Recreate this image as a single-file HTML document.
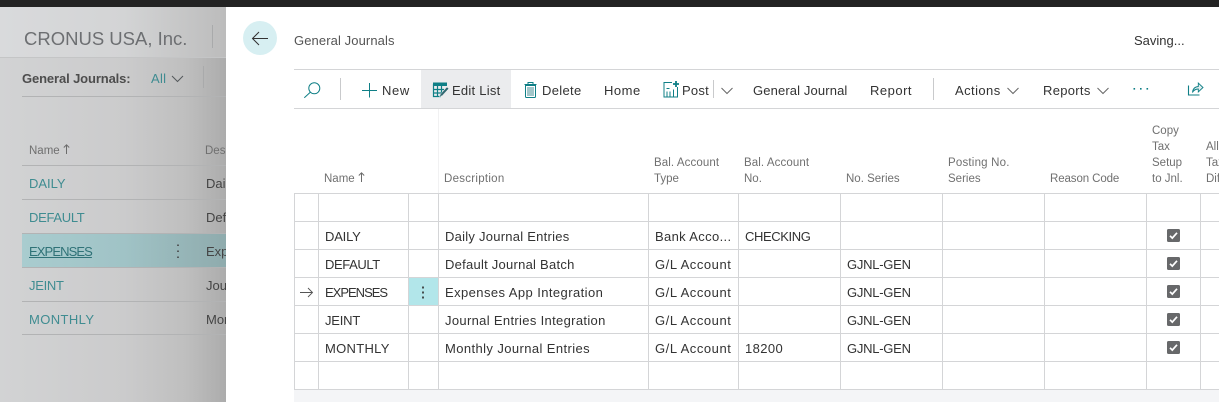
<!DOCTYPE html>
<html><head><meta charset="utf-8"><title>General Journals</title>
<style>
html,body{margin:0;padding:0}
body{width:1219px;height:402px;overflow:hidden;position:relative;background:#fff;font-family:"Liberation Sans",sans-serif;font-size:13px;color:#333}
.t{position:absolute;white-space:nowrap;line-height:20px;height:20px}
.h{font-size:11.5px;color:#707070}
.l{color:#3f8c91}
#left{position:absolute;left:0;top:7px;width:226px;height:395px;overflow:hidden;background:linear-gradient(90deg,#d2d3d4 0,#cbcbcc 55%,#bfbfbf 82%,#acacac 100%)}
svg{position:absolute;left:0;top:0}
</style></head><body>
<div style="position:absolute;left:0;top:0;width:1219px;height:7px;background:#232323"></div>

<div id="left">
<div style="position:absolute;left:0;top:0;width:226px;height:50px;background:linear-gradient(90deg,#d9dadc 0,#d3d4d5 55%,#bcbcbc 100%)"></div>
<div style="position:absolute;left:22px;top:226px;width:204px;height:35px;background:linear-gradient(90deg,#a9cccf 0,#a0c3c6 50%,#8fabad 100%)"></div>
</div>
<svg width="226" height="402" viewBox="0 0 226 402" fill="none" style="z-index:1">
<path d="M0 57.500H226" stroke="#c4c5c6"/>
<path d="M212.500 25V48M203.500 66V88" stroke="#a9aaab"/>
<path d="M22 96.500H226M22 165.500H226M22 199.500H226M22 233.500H226M22 267.500H226M22 301.500H226M22 334.500H226" stroke="#b2b3b4"/>
<path d="M172 76l5.500 5.500L183 76" stroke="#55595c"/>
<path d="M66.500 154V145M63.800 147.500l2.700-2.700 2.700 2.700" stroke="#6b6b6b"/>
<path d="M178 244.500v1.500M178 250.500v1.500M178 256.500v1.500" stroke="#444" stroke-width="1.600"/>
</svg>
<div style="z-index:2;position:absolute;left:0;top:1px;width:226px;height:401px;overflow:hidden">
<span class="t" style="left:24px;top:28px;font-size:18.500px;color:#6d6f72">CRONUS USA, Inc.</span>
<span class="t" style="left:22px;top:68px;font-weight:bold;color:#4d4d4d;letter-spacing:-.12px">General Journals:</span>
<span class="t l" style="left:151px;top:68px;letter-spacing:.3px">All</span>
<span class="t" style="left:29px;top:140px;font-size:11.500px;color:#6f6f6f">Name</span>
<span class="t" style="left:205px;top:140px;font-size:11.500px;color:#6f6f6f">Description</span>
<span class="t l" style="left:29px;top:173px">DAILY</span><span class="t" style="left:206px;top:173px;color:#444">Daily</span>
<span class="t l" style="left:29px;top:207px;letter-spacing:-.3px">DEFAULT</span><span class="t" style="left:206px;top:207px;color:#444">Default</span>
<span class="t" style="left:29px;top:241px;color:#2f7277;text-decoration:underline;letter-spacing:-.9px">EXPENSES</span><span class="t" style="left:206px;top:241px;color:#444">Expenses</span>
<span class="t l" style="left:29px;top:275px;letter-spacing:-.3px">JEINT</span><span class="t" style="left:206px;top:275px;color:#444">Journal</span>
<span class="t l" style="left:29px;top:309px;letter-spacing:.4px">MONTHLY</span><span class="t" style="left:206px;top:309px;color:#444">Monthly</span>
</div>

<div style="position:absolute;left:226px;top:7px;width:993px;height:395px;background:#fff;z-index:3"></div>
<div style="position:absolute;left:294px;top:390px;width:925px;height:12px;background:#f4f5f7;z-index:3"></div>
<div style="position:absolute;left:421px;top:70px;width:90px;height:38px;background:#ebecee;z-index:3"></div>
<div style="position:absolute;left:409px;top:278px;width:29px;height:27px;background:#b2e6ea;z-index:3"></div>

<svg width="1219" height="402" viewBox="0 0 1219 402" fill="none" style="z-index:4">
<circle cx="260" cy="38" r="17" fill="#d7eff2"/>
<path d="M268 38.500H252.500M259 32l-6.500 6.500 6.500 6.500" stroke="#333" stroke-width="1"/>
<path d="M294 69.500H1219M294 108.500H1219" stroke="#d4d5d7"/>
<path d="M438.500 109V193" stroke="#f1f1f2" stroke-width="1"/>
<path d="M294 193.500H1219M294 221.500H1219M294 249.500H1219M294 277.500H1219M294 305.500H1219M294 333.500H1219M294 361.500H1219M294 389.500H1219" stroke="#d4d5d7"/>
<path d="M294.500 193V390M318.500 193V390M408.500 193V390M438.500 193V390M648.500 193V390M738.500 193V390M840.500 193V390M942.500 193V390M1044.500 193V390M1146.500 193V390M1200.500 193V390" stroke="#d4d5d7"/>
<path d="M340.500 78V100M933.500 78V100M713.500 80V98" stroke="#c9cacc"/>
<!-- search -->
<circle cx="314.300" cy="88.300" r="5.500" stroke="#0f7f86" stroke-width="1"/>
<path d="M310.300 92.300L304.300 97.800" stroke="#0f7f86" stroke-width="1"/>
<!-- plus -->
<path d="M369.500 83V97.500M362 90.500H377" stroke="#0f7f86" stroke-width="1"/>
<!-- edit list -->
<path d="M433 82.500h14v3.500h-14z" fill="#0f7f86"/>
<path d="M433.500 84v12.500h7.500M433 89.500h11M433 93h8M437.500 86v10.500M441.500 86v7" stroke="#0f7f86" stroke-width="1.200"/>
<path d="M447 87l-6.500 7-1 2.700 2.700-1 6.500-7z" fill="#2f6770" stroke="#ebecee" stroke-width=".5"/>
<!-- delete -->
<path d="M525.500 85.500h10v11a1 1 0 0 1-1 1h-8a1 1 0 0 1-1-1z" stroke="#0f7f86"/>
<path d="M527 87h7v9h-7z" fill="#a2c6c9"/>
<path d="M524.500 84.500h12M528 84.500v-2h5v2" stroke="#0f7f86"/>
<!-- post -->
<path d="M672 82.500h-8v14.500h13.500V87" stroke="#0f7f86"/>
<path d="M666.500 88.500h3M667 91.500v5M670 91.500v5M673.500 89.500v7.500" stroke="#0f7f86"/>
<path d="M676 81v6M673 84h6" stroke="#0f7f86" stroke-width="1.800"/>
<!-- chevrons -->
<path d="M721.500 88l5.500 5.500 5.500-5.500M1007.500 88l5.500 5.500 5.500-5.500M1097.500 88l5.500 5.500 5.500-5.500" stroke="#666" stroke-width="1"/>
<!-- dots -->
<path d="M1133.500 88h1.600v1.600h-1.600zM1140 88h1.600v1.600H1140zM1146.500 88h1.600v1.600h-1.600z" fill="#0f7f86"/>
<!-- share -->
<path d="M1188.500 85.500v9.500h11" stroke="#0f7f86" stroke-width="1.100"/>
<path d="M1192.500 92.500c.3-3.500 2.300-5.700 5.800-6V83l4.700 4.500-4.700 4.500v-3c-2.500 0-4.500 1-5.800 3.500z" stroke="#0f7f86" fill="#e3eff0" stroke-width=".9"/>
<!-- sort arrow -->
<path d="M361.500 182V173M358.800 175.500l2.700-2.700 2.700 2.700" stroke="#6b6b6b"/>
<!-- row arrow -->
<path d="M300 292.500H312.500M308 288l4.500 4.500L308 297" stroke="#555" stroke-width=".9"/>
<!-- row dots -->
<path d="M423 286.500v2M423 291.500v2M423 296.500v2" stroke="#333" stroke-width="1.700"/>
<!-- checkboxes -->
<g><rect x="1167" y="229" width="13" height="13" rx="1.500" fill="#67686a"/><path d="M1170 235.800l2.300 2.300 4.700-5.300" stroke="#fff" stroke-width="1.700"/></g>
<g transform="translate(0 28)"><rect x="1167" y="229" width="13" height="13" rx="1.500" fill="#67686a"/><path d="M1170 235.800l2.300 2.300 4.700-5.300" stroke="#fff" stroke-width="1.700"/></g>
<g transform="translate(0 56)"><rect x="1167" y="229" width="13" height="13" rx="1.500" fill="#67686a"/><path d="M1170 235.800l2.300 2.300 4.700-5.300" stroke="#fff" stroke-width="1.700"/></g>
<g transform="translate(0 84)"><rect x="1167" y="229" width="13" height="13" rx="1.500" fill="#67686a"/><path d="M1170 235.800l2.300 2.300 4.700-5.300" stroke="#fff" stroke-width="1.700"/></g>
<g transform="translate(0 112)"><rect x="1167" y="229" width="13" height="13" rx="1.500" fill="#67686a"/><path d="M1170 235.800l2.300 2.300 4.700-5.300" stroke="#fff" stroke-width="1.700"/></g>
</svg>

<div style="position:absolute;left:0;top:1px;width:1219px;height:401px;z-index:5;overflow:hidden">
<span class="t" style="left:294px;top:30px;color:#555;letter-spacing:.1px">General Journals</span>
<span class="t" style="left:1134px;top:30px;color:#333">Saving...</span>

<span class="t" style="left:382px;top:80px;letter-spacing:.6px">New</span>
<span class="t" style="left:452px;top:80px;letter-spacing:.25px">Edit List</span>
<span class="t" style="left:542px;top:80px;letter-spacing:.33px">Delete</span>
<span class="t" style="left:604px;top:80px;letter-spacing:.5px">Home</span>
<span class="t" style="left:682px;top:80px;letter-spacing:.25px">Post</span>
<span class="t" style="left:753px;top:80px;letter-spacing:.13px">General Journal</span>
<span class="t" style="left:870px;top:80px;letter-spacing:.5px">Report</span>
<span class="t" style="left:955px;top:80px;letter-spacing:.43px">Actions</span>
<span class="t" style="left:1043px;top:80px;letter-spacing:.3px">Reports</span>

<span class="t h" style="left:324px;top:168px">Name</span>
<span class="t h" style="left:444px;top:168px;letter-spacing:.27px">Description</span>
<span class="t h" style="left:654px;top:152px;letter-spacing:.1px">Bal. Account</span>
<span class="t h" style="left:654px;top:168px">Type</span>
<span class="t h" style="left:744px;top:152px;letter-spacing:.1px">Bal. Account</span>
<span class="t h" style="left:744px;top:168px">No.</span>
<span class="t h" style="left:846px;top:168px">No. Series</span>
<span class="t h" style="left:948px;top:152px;letter-spacing:.2px">Posting No.</span>
<span class="t h" style="left:948px;top:168px">Series</span>
<span class="t h" style="left:1050px;top:168px;letter-spacing:-.1px">Reason Code</span>
<span class="t h" style="left:1152px;top:120px">Copy</span>
<span class="t h" style="left:1152px;top:136px">Tax</span>
<span class="t h" style="left:1152px;top:152px">Setup</span>
<span class="t h" style="left:1152px;top:168px">to Jnl.</span>
<span class="t h" style="left:1206px;top:136px">All</span>
<span class="t h" style="left:1206px;top:152px">Tax</span>
<span class="t h" style="left:1206px;top:168px">Diff</span>

<span class="t" style="left:325px;top:226px;letter-spacing:-.2px">DAILY</span>
<span class="t" style="left:445px;top:226px;letter-spacing:.25px">Daily Journal Entries</span>
<span class="t" style="left:655px;top:226px;letter-spacing:.35px">Bank Acco...</span>
<span class="t" style="left:745px;top:226px;letter-spacing:-.4px">CHECKING</span>

<span class="t" style="left:325px;top:254px;letter-spacing:-.4px">DEFAULT</span>
<span class="t" style="left:445px;top:254px;letter-spacing:.25px">Default Journal Batch</span>
<span class="t" style="left:655px;top:254px;letter-spacing:.55px">G/L Account</span>
<span class="t" style="left:847px;top:254px;letter-spacing:-.25px">GJNL-GEN</span>

<span class="t" style="left:325px;top:282px;letter-spacing:-1px">EXPENSES</span>
<span class="t" style="left:445px;top:282px;letter-spacing:.42px">Expenses App Integration</span>
<span class="t" style="left:655px;top:282px;letter-spacing:.55px">G/L Account</span>
<span class="t" style="left:847px;top:282px;letter-spacing:-.25px">GJNL-GEN</span>

<span class="t" style="left:325px;top:310px;letter-spacing:-.2px">JEINT</span>
<span class="t" style="left:445px;top:310px;letter-spacing:.33px">Journal Entries Integration</span>
<span class="t" style="left:655px;top:310px;letter-spacing:.55px">G/L Account</span>
<span class="t" style="left:847px;top:310px;letter-spacing:-.25px">GJNL-GEN</span>

<span class="t" style="left:325px;top:338px;letter-spacing:.3px">MONTHLY</span>
<span class="t" style="left:445px;top:338px;letter-spacing:.4px">Monthly Journal Entries</span>
<span class="t" style="left:655px;top:338px;letter-spacing:.55px">G/L Account</span>
<span class="t" style="left:745px;top:338px;letter-spacing:.4px">18200</span>
<span class="t" style="left:847px;top:338px;letter-spacing:-.25px">GJNL-GEN</span>
</div>
</body></html>
